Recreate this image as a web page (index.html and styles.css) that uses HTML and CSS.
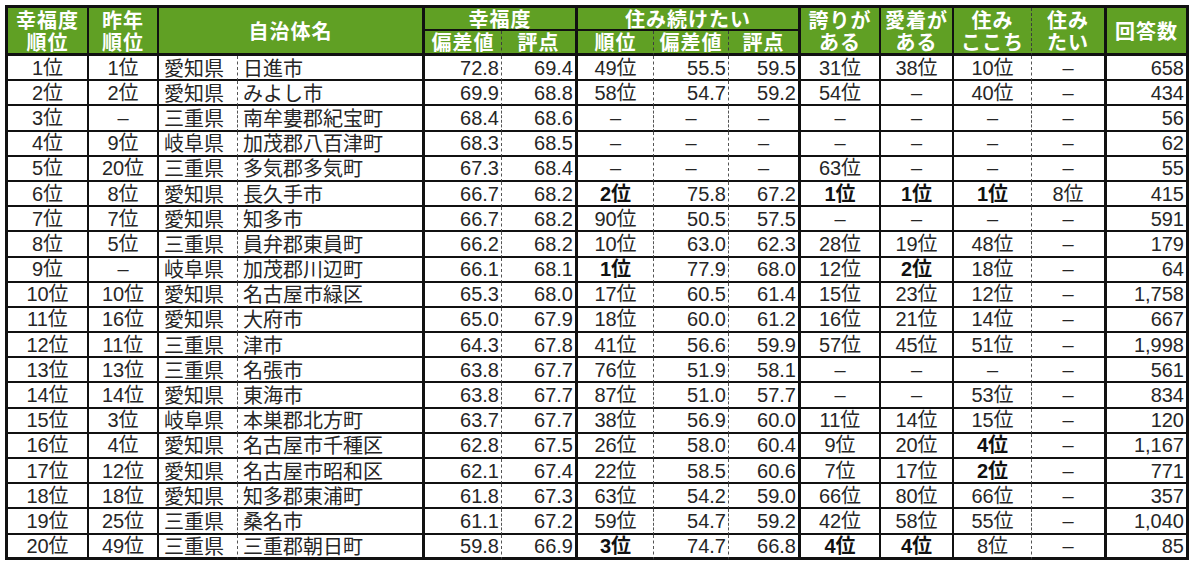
FILE: index.html
```html
<!DOCTYPE html>
<html lang="ja">
<head>
<meta charset="utf-8">
<title>幸福度ランキング</title>
<link rel="stylesheet" href="styles.css">
</head>
<body>
<table class="rank">
<colgroup>
<col class="w81"><col class="w70"><col class="w79"><col class="w187"><col class="w77"><col class="w76"><col class="w76"><col class="w75"><col class="w72"><col class="w80"><col class="w73"><col class="w78"><col class="w75"><col class="w82">
</colgroup>
<thead>
<tr class="h1">
<th rowspan="2" class="two"><span class="ln">幸福度</span><span class="ln">順位</span></th>
<th rowspan="2" class="two"><span class="ln">昨年</span><span class="ln">順位</span></th>
<th rowspan="2" colspan="2" class="tk">自治体名</th>
<th colspan="2" class="grp tk">幸福度</th>
<th colspan="3" class="grp tk">住み続けたい</th>
<th rowspan="2" class="two"><span class="ln">誇りが</span><span class="ln">ある</span></th>
<th rowspan="2" class="two"><span class="ln">愛着が</span><span class="ln">ある</span></th>
<th rowspan="2" class="two dr"><span class="ln">住み</span><span class="ln">ここち</span></th>
<th rowspan="2" class="two tk"><span class="ln">住み</span><span class="ln">たい</span></th>
<th rowspan="2" class="last">回答数</th>
</tr>
<tr class="h2">
<th class="dr">偏差値</th>
<th class="tk">評点</th>
<th class="dr">順位</th>
<th class="dr">偏差値</th>
<th class="tk">評点</th>
</tr>
</thead>
<tbody>
<tr><td>1位</td><td>1位</td><td class="l dr">愛知県</td><td class="l tk">日進市</td><td class="r dr">72.8</td><td class="r tk">69.4</td><td class="dr">49位</td><td class="r dr">55.5</td><td class="r tk">59.5</td><td>31位</td><td>38位</td><td class="dr">10位</td><td class="tk">–</td><td class="r last">658</td></tr>
<tr><td>2位</td><td>2位</td><td class="l dr">愛知県</td><td class="l tk">みよし市</td><td class="r dr">69.9</td><td class="r tk">68.8</td><td class="dr">58位</td><td class="r dr">54.7</td><td class="r tk">59.2</td><td>54位</td><td>–</td><td class="dr">40位</td><td class="tk">–</td><td class="r last">434</td></tr>
<tr><td>3位</td><td>–</td><td class="l dr">三重県</td><td class="l tk">南牟婁郡紀宝町</td><td class="r dr">68.4</td><td class="r tk">68.6</td><td class="dr">–</td><td class="dr">–</td><td class="tk">–</td><td>–</td><td>–</td><td class="dr">–</td><td class="tk">–</td><td class="r last">56</td></tr>
<tr><td>4位</td><td>9位</td><td class="l dr">岐阜県</td><td class="l tk">加茂郡八百津町</td><td class="r dr">68.3</td><td class="r tk">68.5</td><td class="dr">–</td><td class="dr">–</td><td class="tk">–</td><td>–</td><td>–</td><td class="dr">–</td><td class="tk">–</td><td class="r last">62</td></tr>
<tr><td>5位</td><td>20位</td><td class="l dr">三重県</td><td class="l tk">多気郡多気町</td><td class="r dr">67.3</td><td class="r tk">68.4</td><td class="dr">–</td><td class="dr">–</td><td class="tk">–</td><td>63位</td><td>–</td><td class="dr">–</td><td class="tk">–</td><td class="r last">55</td></tr>
<tr><td>6位</td><td>8位</td><td class="l dr">愛知県</td><td class="l tk">長久手市</td><td class="r dr">66.7</td><td class="r tk">68.2</td><td class="dr b">2位</td><td class="r dr">75.8</td><td class="r tk">67.2</td><td class="b">1位</td><td class="b">1位</td><td class="dr b">1位</td><td class="tk">8位</td><td class="r last">415</td></tr>
<tr><td>7位</td><td>7位</td><td class="l dr">愛知県</td><td class="l tk">知多市</td><td class="r dr">66.7</td><td class="r tk">68.2</td><td class="dr">90位</td><td class="r dr">50.5</td><td class="r tk">57.5</td><td>–</td><td>–</td><td class="dr">–</td><td class="tk">–</td><td class="r last">591</td></tr>
<tr><td>8位</td><td>5位</td><td class="l dr">三重県</td><td class="l tk">員弁郡東員町</td><td class="r dr">66.2</td><td class="r tk">68.2</td><td class="dr">10位</td><td class="r dr">63.0</td><td class="r tk">62.3</td><td>28位</td><td>19位</td><td class="dr">48位</td><td class="tk">–</td><td class="r last">179</td></tr>
<tr><td>9位</td><td>–</td><td class="l dr">岐阜県</td><td class="l tk">加茂郡川辺町</td><td class="r dr">66.1</td><td class="r tk">68.1</td><td class="dr b">1位</td><td class="r dr">77.9</td><td class="r tk">68.0</td><td>12位</td><td class="b">2位</td><td class="dr">18位</td><td class="tk">–</td><td class="r last">64</td></tr>
<tr><td>10位</td><td>10位</td><td class="l dr">愛知県</td><td class="l tk">名古屋市緑区</td><td class="r dr">65.3</td><td class="r tk">68.0</td><td class="dr">17位</td><td class="r dr">60.5</td><td class="r tk">61.4</td><td>15位</td><td>23位</td><td class="dr">12位</td><td class="tk">–</td><td class="r last">1,758</td></tr>
<tr><td>11位</td><td>16位</td><td class="l dr">愛知県</td><td class="l tk">大府市</td><td class="r dr">65.0</td><td class="r tk">67.9</td><td class="dr">18位</td><td class="r dr">60.0</td><td class="r tk">61.2</td><td>16位</td><td>21位</td><td class="dr">14位</td><td class="tk">–</td><td class="r last">667</td></tr>
<tr><td>12位</td><td>11位</td><td class="l dr">三重県</td><td class="l tk">津市</td><td class="r dr">64.3</td><td class="r tk">67.8</td><td class="dr">41位</td><td class="r dr">56.6</td><td class="r tk">59.9</td><td>57位</td><td>45位</td><td class="dr">51位</td><td class="tk">–</td><td class="r last">1,998</td></tr>
<tr><td>13位</td><td>13位</td><td class="l dr">三重県</td><td class="l tk">名張市</td><td class="r dr">63.8</td><td class="r tk">67.7</td><td class="dr">76位</td><td class="r dr">51.9</td><td class="r tk">58.1</td><td>–</td><td>–</td><td class="dr">–</td><td class="tk">–</td><td class="r last">561</td></tr>
<tr><td>14位</td><td>14位</td><td class="l dr">愛知県</td><td class="l tk">東海市</td><td class="r dr">63.8</td><td class="r tk">67.7</td><td class="dr">87位</td><td class="r dr">51.0</td><td class="r tk">57.7</td><td>–</td><td>–</td><td class="dr">53位</td><td class="tk">–</td><td class="r last">834</td></tr>
<tr><td>15位</td><td>3位</td><td class="l dr">岐阜県</td><td class="l tk">本巣郡北方町</td><td class="r dr">63.7</td><td class="r tk">67.7</td><td class="dr">38位</td><td class="r dr">56.9</td><td class="r tk">60.0</td><td>11位</td><td>14位</td><td class="dr">15位</td><td class="tk">–</td><td class="r last">120</td></tr>
<tr><td>16位</td><td>4位</td><td class="l dr">愛知県</td><td class="l tk">名古屋市千種区</td><td class="r dr">62.8</td><td class="r tk">67.5</td><td class="dr">26位</td><td class="r dr">58.0</td><td class="r tk">60.4</td><td>9位</td><td>20位</td><td class="dr b">4位</td><td class="tk">–</td><td class="r last">1,167</td></tr>
<tr><td>17位</td><td>12位</td><td class="l dr">愛知県</td><td class="l tk">名古屋市昭和区</td><td class="r dr">62.1</td><td class="r tk">67.4</td><td class="dr">22位</td><td class="r dr">58.5</td><td class="r tk">60.6</td><td>7位</td><td>17位</td><td class="dr b">2位</td><td class="tk">–</td><td class="r last">771</td></tr>
<tr><td>18位</td><td>18位</td><td class="l dr">愛知県</td><td class="l tk">知多郡東浦町</td><td class="r dr">61.8</td><td class="r tk">67.3</td><td class="dr">63位</td><td class="r dr">54.2</td><td class="r tk">59.0</td><td>66位</td><td>80位</td><td class="dr">66位</td><td class="tk">–</td><td class="r last">357</td></tr>
<tr><td>19位</td><td>25位</td><td class="l dr">三重県</td><td class="l tk">桑名市</td><td class="r dr">61.1</td><td class="r tk">67.2</td><td class="dr">59位</td><td class="r dr">54.7</td><td class="r tk">59.2</td><td>42位</td><td>58位</td><td class="dr">55位</td><td class="tk">–</td><td class="r last">1,040</td></tr>
<tr class="end"><td>20位</td><td>49位</td><td class="l dr">三重県</td><td class="l tk">三重郡朝日町</td><td class="r dr">59.8</td><td class="r tk">66.9</td><td class="dr b">3位</td><td class="r dr">74.7</td><td class="r tk">66.8</td><td class="b">4位</td><td class="b">4位</td><td class="dr">8位</td><td class="tk">–</td><td class="r last">85</td></tr>
</tbody>
</table>
</body>
</html>
```

FILE: styles.css
```css
html, body {
  margin: 0;
  padding: 0;
  background: #ffffff;
}

body {
  padding: 5px 0 0 5px;
  font-family: "Liberation Sans", "Noto Sans CJK JP", sans-serif;
  color: #262626;
}

.rank {
  table-layout: fixed;
  border-collapse: separate;
  border-spacing: 0;
  width: 1184px;
  border-top: 3px solid #111;
  border-left: 3px solid #111;
}

.w81 { width: 81px; }
.w70 { width: 70px; }
.w79 { width: 79px; }
.w187 { width: 187px; }
.w77 { width: 77px; }
.w76 { width: 76px; }
.w75 { width: 75px; }
.w72 { width: 72px; }
.w80 { width: 80px; }
.w73 { width: 73px; }
.w78 { width: 78px; }
.w82 { width: 82px; }

.rank th,
.rank td {
  box-sizing: border-box;
  padding: 0;
  border-right: 2px solid #111;
  border-bottom: 2px solid #111;
  font-size: 20px;
  line-height: 20px;
  text-align: center;
  vertical-align: middle;
  white-space: nowrap;
}

.rank th {
  background: #60a024;
  color: #ffffff;
  font-family: "Noto Sans CJK JP", sans-serif;
  font-weight: 700;
  letter-spacing: 1px;
}

.rank thead tr.h1 { height: 23px; }
.rank thead tr.h2 { height: 25px; }

.rank th.two {
  border-bottom: 3px solid #111;
}

.rank th.two .ln {
  display: block;
  line-height: 22px;
  height: 22px;
}

.rank tr.h2 th,
.rank th.last,
.rank th.tk[rowspan] {
  border-bottom: 3px solid #111;
}

.rank th.grp {
  border-bottom: 2px solid #111;
}

.rank tbody tr { height: 25.2px; }

.rank td {
  font-weight: 400;
}

.rank .tk { border-right-width: 3px; }
.rank .last { border-right-width: 3px; }

.rank .dr {
  border-right: 1px dashed #555;
}

.rank th.dr {
  border-right: 1px dashed #3d3d3d;
}

.rank td.l {
  text-align: left;
  padding-left: 5px;
  font-family: "Noto Sans CJK JP", sans-serif;
}

.rank td.r {
  text-align: right;
  padding-right: 2px;
}

.rank td.b {
  font-weight: 700;
  color: #111;
}

.rank tr.end td {
  border-bottom-width: 3px;
}
```
